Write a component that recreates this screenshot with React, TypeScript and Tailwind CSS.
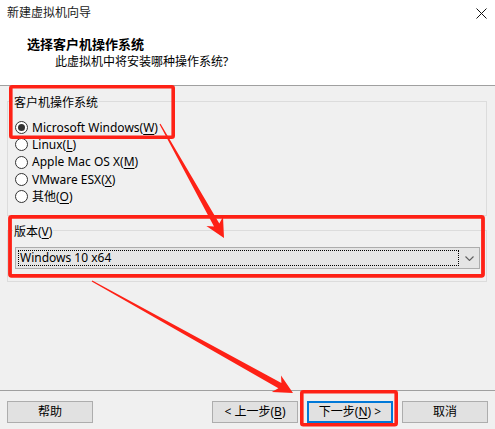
import React from "react";

type P = [number, number];

function arrowPoints(s: P, t: P, headLen = 19, headHalf = 9.5, w0 = 0.6, w1 = 3): string {
  const dx = t[0] - s[0];
  const dy = t[1] - s[1];
  const L = Math.hypot(dx, dy);
  const ux = dx / L;
  const uy = dy / L;
  const px = -uy;
  const py = ux;
  const bx = t[0] - ux * headLen;
  const by = t[1] - uy * headLen;
  const ix = bx + ux * 4;
  const iy = by + uy * 4;
  const pts: P[] = [
    [s[0] + px * w0, s[1] + py * w0],
    [ix + px * w1, iy + py * w1],
    [bx + px * headHalf, by + py * headHalf],
    [t[0], t[1]],
    [bx - px * headHalf, by - py * headHalf],
    [ix - px * w1, iy - py * w1],
    [s[0] - px * w0, s[1] - py * w0],
  ];
  return pts.map((p) => `${p[0].toFixed(1)},${p[1].toFixed(1)}`).join(" ");
}

function Radio({ checked, children }: { checked?: boolean; children: React.ReactNode }) {
  return (
    <div className="flex h-[17.3px] items-center">
      <span className="flex h-[13px] w-[13px] items-center justify-center rounded-full border border-[#333333] bg-white">
        {checked && <span className="h-[7px] w-[7px] rounded-full bg-[#333333]" />}
      </span>
      <span className="ml-[4px] text-[12px] leading-[16px] text-black">{children}</span>
    </div>
  );
}

function Btn({ children, primary }: { children: React.ReactNode; primary?: boolean }) {
  return (
    <div
      className={
        "flex h-[22px] w-[86px] items-center justify-center bg-[#e1e1e1] text-[12px] leading-[16px] text-black " +
        (primary ? "border-2 border-[#0078d7]" : "border border-[#adadad]")
      }
    >
      {children}
    </div>
  );
}

export default function App() {
  const red = "#fe2116";
  return (
    <div className="relative flex h-[429px] w-[495px] flex-col overflow-hidden bg-[#f0f0f0] font-['Noto_Sans','Noto_Sans_CJK_SC',sans-serif] text-black">
      {/* Header */}
      <div className="h-[86px] shrink-0 border-b border-[#a0a0a0] bg-white">
        <div className="flex h-[26px] items-center justify-between pl-[7px] pr-[8px]">
          <span className="text-[12px] leading-[16px] text-[#1a1a1a]">新建虚拟机向导</span>
          <svg width="11" height="11" viewBox="0 0 11 11" className="mt-[1px]">
            <path d="M0.5 0.5 L10.5 10.5 M10.5 0.5 L0.5 10.5" stroke="#111" strokeWidth="1" fill="none" />
          </svg>
        </div>
        <div className="mt-[10px] pl-[27px] text-[13px] font-bold leading-[16px]">选择客户机操作系统</div>
        <div className="mt-[2px] pl-[55px] text-[12px] leading-[16px]">此虚拟机中将安装哪种操作系统?</div>
      </div>

      {/* Content */}
      <div className="flex flex-1 flex-col">
        <fieldset className="ml-[7px] mr-[8px] mt-[5px] border border-[#dcdcdc] pb-[10px] pl-[7px]">
          <legend className="-ml-[2px] px-[1px] pt-[4px] text-[12px] leading-[16px]">客户机操作系统</legend>
          <div className="mt-[8px] flex flex-col">
            <Radio checked>
              Microsoft Windows(<u className="underline-offset-2">W</u>)
            </Radio>
            <Radio>
              Linux(<u className="underline-offset-2">L</u>)
            </Radio>
            <Radio>
              Apple Mac OS X(<u className="underline-offset-2">M</u>)
            </Radio>
            <Radio>
              VMware ESX(<u className="underline-offset-2">X</u>)
            </Radio>
            <Radio>
              其他(<u className="underline-offset-2">O</u>)
            </Radio>
          </div>
        </fieldset>

        <fieldset className="ml-[7px] mr-[8px] mt-[4px] border border-[#dcdcdc] pb-[12px] pl-[7px] pr-[6px]">
          <legend className="-ml-[2px] px-[1px] pt-[4px] text-[12px] leading-[16px]">
            版本(<u className="underline-offset-2">V</u>)
          </legend>
          <div className="mt-[7px] flex h-[22px] items-center border border-[#adadad] bg-[#e5e5e5] pl-[2px] pr-[5px]">
            <div className="flex h-[16px] flex-1 items-center border border-dotted border-black pl-[1px] text-[12px] leading-[16px]">
              Windows 10 x64
            </div>
            <svg width="9" height="5" viewBox="0 0 9 5" className="ml-[6px]">
              <path d="M0.5 0.5 L4.5 4.5 L8.5 0.5" stroke="#606060" strokeWidth="1.1" fill="none" />
            </svg>
          </div>
        </fieldset>
        <div className="flex-1" />
      </div>

      {/* Footer */}
      <div className="flex h-[39px] shrink-0 items-start border-t border-[#a0a0a0] px-[7px] pt-[10px]">
        <Btn>帮助</Btn>
        <div className="flex-1" />
        <div className="flex gap-[9px]">
          <Btn>
            &lt; 上一步(<u className="underline-offset-2">B</u>)
          </Btn>
          <Btn primary>
            下一步(<u className="underline-offset-2">N</u>) &gt;
          </Btn>
          <Btn>取消</Btn>
        </div>
      </div>

      {/* Annotations */}
      <svg className="pointer-events-none absolute left-0 top-0" width="495" height="429" viewBox="0 0 495 429">
        <rect x="10.8" y="86.8" width="162.4" height="50.4" rx="1.5" fill="none" stroke={red} strokeWidth="3.6" />
        <rect x="10" y="216.8" width="473" height="59" rx="1.5" fill="none" stroke={red} strokeWidth="3.8" />
        <rect x="301.8" y="391.8" width="94.4" height="33" rx="1.5" fill="none" stroke={red} strokeWidth="3.6" />
        <polygon points={arrowPoints([160, 124], [224, 238])} fill={red} />
        <polygon points={arrowPoints([92, 281], [293, 393])} fill={red} />
      </svg>
    </div>
  );
}
